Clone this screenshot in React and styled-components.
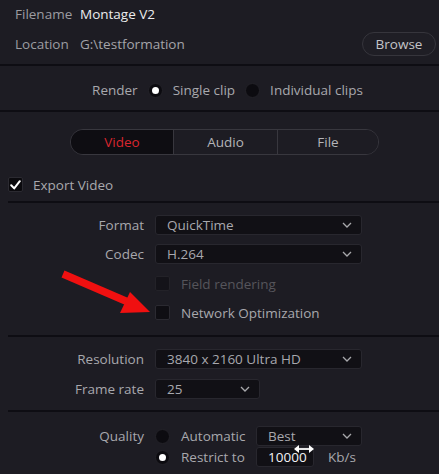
import React from "react";
import styled, { createGlobalStyle } from "styled-components";

const GlobalStyle = createGlobalStyle`
  html, body {
    margin: 0;
    padding: 0;
    background: #1d1c23;
  }
  body {
    font-family: "Open Sans", "Noto Sans", sans-serif;
    font-size: 13.5px;
    color: #aeaeb2;
  }
`;

const Chevron = () => (
  <svg width="10" height="6" viewBox="0 0 10 6">
    <path d="M1 1 L5 5 L9 1" fill="none" stroke="#a8a8ac" strokeWidth="1.3" />
  </svg>
);

const Check = () => (
  <svg width="11" height="10" viewBox="0 0 11 10">
    <path
      d="M1.2 5.2 L4.2 8.4 L9.8 1.2"
      fill="none"
      stroke="#ffffff"
      strokeWidth="2"
      strokeLinecap="round"
      strokeLinejoin="round"
    />
  </svg>
);

const App = () => {
  return (
    <Panel>
      <GlobalStyle />
      <FileSection>
        <FileRow>
          <FileLabel>Filename</FileLabel>
          <FileValue $bright>Montage V2</FileValue>
        </FileRow>
        <FileRow>
          <FileLabel>Location</FileLabel>
          <FileValue>G:\testformation</FileValue>
          <BrowseButton type="button">Browse</BrowseButton>
        </FileRow>
      </FileSection>
      <Divider />
      <RenderRow>
        <span>Render</span>
        <Radio $checked />
        <span>Single clip</span>
        <Radio />
        <span>Individual clips</span>
      </RenderRow>
      <Divider />
      <TabBar>
        <Tab $active>Video</Tab>
        <Tab>Audio</Tab>
        <Tab>File</Tab>
      </TabBar>
      <CheckRow>
        <Box $checked>
          <Check />
        </Box>
        <span>Export Video</span>
      </CheckRow>
      <Divider $inset />
      <FormSection $top="12px" $bottom="15px" $gap="9px">
        <FieldRow>
          <FieldLabel>Format</FieldLabel>
          <Select $width="207px">
            <span>QuickTime</span>
            <Chevron />
          </Select>
        </FieldRow>
        <FieldRow>
          <FieldLabel>Codec</FieldLabel>
          <Select $width="207px">
            <span>H.264</span>
            <Chevron />
          </Select>
        </FieldRow>
        <OptionRow $dim>
          <Box $dim />
          <span>Field rendering</span>
        </OptionRow>
        <OptionRow>
          <Box />
          <span>Network Optimization</span>
        </OptionRow>
        <Arrow width="100" height="56" viewBox="0 0 100 56">
          <path d="M3 9 L68 37" stroke="#f01010" strokeWidth="7.5" />
          <polygon points="90,47 70,27 60,48" fill="#f01010" />
        </Arrow>
      </FormSection>
      <Divider $inset />
      <FormSection $top="12px" $bottom="11px" $gap="10px">
        <FieldRow>
          <FieldLabel>Resolution</FieldLabel>
          <Select $width="207px">
            <span>3840 x 2160 Ultra HD</span>
            <Chevron />
          </Select>
        </FieldRow>
        <FieldRow>
          <FieldLabel>Frame rate</FieldLabel>
          <Select $width="105px">
            <span>25</span>
            <Chevron />
          </Select>
        </FieldRow>
      </FormSection>
      <Divider $inset />
      <QualitySection>
        <QualityLabel>Quality</QualityLabel>
        <QualityOptions>
          <QualityRow>
            <Radio />
            <OptionText>Automatic</OptionText>
            <Select $width="106px">
              <span>Best</span>
              <Chevron />
            </Select>
          </QualityRow>
          <QualityRow>
            <Radio $checked />
            <OptionText>Restrict to</OptionText>
            <NumberBox>
              10000
              <Cursor width="20" height="10" viewBox="0 0 20 10">
                <path d="M3 5 H17" stroke="#fff" strokeWidth="1.8" />
                <polygon points="0,5 5,1 5,9" fill="#fff" />
                <polygon points="20,5 15,1 15,9" fill="#fff" />
              </Cursor>
            </NumberBox>
            <Unit>Kb/s</Unit>
          </QualityRow>
        </QualityOptions>
      </QualitySection>
    </Panel>
  );
};

export default App;

const Panel = styled.div`
  width: 439px;
  height: 474px;
  overflow: hidden;
  background: #1d1c23;
  display: flex;
  flex-direction: column;
`;

const Divider = styled.div`
  height: 2px;
  background: #0e0d13;
  margin-left: ${({ $inset }) => ($inset ? "8px" : "0")};
  flex-shrink: 0;
`;

const FileSection = styled.div`
  display: flex;
  flex-direction: column;
  padding: 3px 3px 10px 15px;
  gap: 9px;
`;

const FileRow = styled.div`
  display: flex;
  align-items: center;
  height: 21px;
`;

const FileLabel = styled.span`
  width: 65px;
  color: #9c9ca1;
`;

const FileValue = styled.span`
  flex: 1;
  color: ${({ $bright }) => ($bright ? "#ececee" : "#a4a4a9")};
`;

const BrowseButton = styled.button`
  width: 74px;
  height: 24px;
  border-radius: 12px;
  border: 1px solid #36353c;
  background: #1f1e25;
  color: #c4c4c8;
  font-family: inherit;
  font-size: 13.5px;
  padding: 0;
`;

const RenderRow = styled.div`
  height: 44px;
  box-sizing: border-box;
  padding: 4px 0 0 16px;
  display: flex;
  align-items: center;
  justify-content: center;
  gap: 10px;
  color: #a8a8ad;
`;

const Radio = styled.span`
  width: 15px;
  height: 15px;
  border-radius: 50%;
  background: #0c0b10;
  border: 1px solid #232228;
  box-sizing: border-box;
  display: inline-flex;
  align-items: center;
  justify-content: center;
  flex-shrink: 0;

  &::after {
    content: "";
    width: 7px;
    height: 7px;
    border-radius: 50%;
    background: #ffffff;
    display: ${({ $checked }) => ($checked ? "block" : "none")};
  }
`;

const TabBar = styled.div`
  margin: 17px 0 0 70px;
  width: 309px;
  height: 26px;
  display: grid;
  grid-template-columns: 102px 104px 1fr;
  border: 1px solid #38373e;
  border-radius: 13px;
  overflow: hidden;
  box-sizing: border-box;
`;

const Tab = styled.div`
  display: flex;
  align-items: center;
  justify-content: center;
  background: ${({ $active }) => ($active ? "#0e0d12" : "#1d1c23")};
  color: ${({ $active }) => ($active ? "#d8262e" : "#b4b4b8")};
  border-left: 1px solid #38373e;

  &:first-child {
    border-left: none;
  }
`;

const CheckRow = styled.div`
  display: flex;
  align-items: center;
  gap: 10px;
  height: 17px;
  margin: 21px 0 8px;
  padding-left: 8px;
  color: #a9a9ae;
`;

const Box = styled.span`
  width: 15px;
  height: 15px;
  box-sizing: border-box;
  border-radius: 2px;
  background: ${({ $checked }) => ($checked ? "#0b0a0e" : "#0f0e13")};
  border: 1px solid ${({ $dim }) => ($dim ? "#27262c" : "#2b2a31")};
  opacity: ${({ $dim }) => ($dim ? 0.6 : 1)};
  display: inline-flex;
  align-items: center;
  justify-content: center;
  flex-shrink: 0;
`;

const FormSection = styled.div`
  position: relative;
  display: flex;
  flex-direction: column;
  gap: ${({ $gap }) => $gap};
  padding: ${({ $top, $bottom }) => `${$top} 0 ${$bottom} 0`};
`;

const FieldRow = styled.div`
  display: flex;
  align-items: center;
  gap: 11px;
  height: 20px;
`;

const FieldLabel = styled.span`
  width: 144px;
  text-align: right;
  color: #a8a8ad;
`;

const Select = styled.div`
  width: ${({ $width }) => $width};
  height: 20px;
  box-sizing: border-box;
  background: #111015;
  border: 1px solid #28272e;
  border-radius: 3px;
  display: flex;
  align-items: center;
  justify-content: space-between;
  padding: 0 9px 0 11px;
  color: #a8a8ae;
`;

const OptionRow = styled.div`
  display: flex;
  align-items: center;
  gap: 11px;
  height: 15px;
  margin-left: 155px;
  margin-top: ${({ $dim }) => ($dim ? "3px" : "5px")};
  color: ${({ $dim }) => ($dim ? "#56555b" : "#a8a8ad")};
`;

const Arrow = styled.svg`
  position: absolute;
  left: 60px;
  top: 62px;
`;

const QualitySection = styled.div`
  display: flex;
  padding-top: 14px;
`;

const QualityLabel = styled.span`
  width: 144px;
  text-align: right;
  line-height: 20px;
  color: #a8a8ad;
`;

const QualityOptions = styled.div`
  display: flex;
  flex-direction: column;
  gap: 1px;
  margin-left: 11px;
`;

const QualityRow = styled.div`
  display: flex;
  align-items: center;
  height: 20px;
`;

const OptionText = styled.span`
  width: 75px;
  margin-left: 11px;
  color: #a8a8ad;
`;

const NumberBox = styled.div`
  position: relative;
  width: 58px;
  height: 20px;
  box-sizing: border-box;
  background: #111015;
  border: 1px solid #28272e;
  border-radius: 3px;
  display: flex;
  align-items: center;
  padding-left: 11px;
  color: #f2f2f4;
`;

const Cursor = styled.svg`
  position: absolute;
  left: 37px;
  top: -4px;
`;

const Unit = styled.span`
  margin-left: 14px;
  color: #a8a8ad;
`;
